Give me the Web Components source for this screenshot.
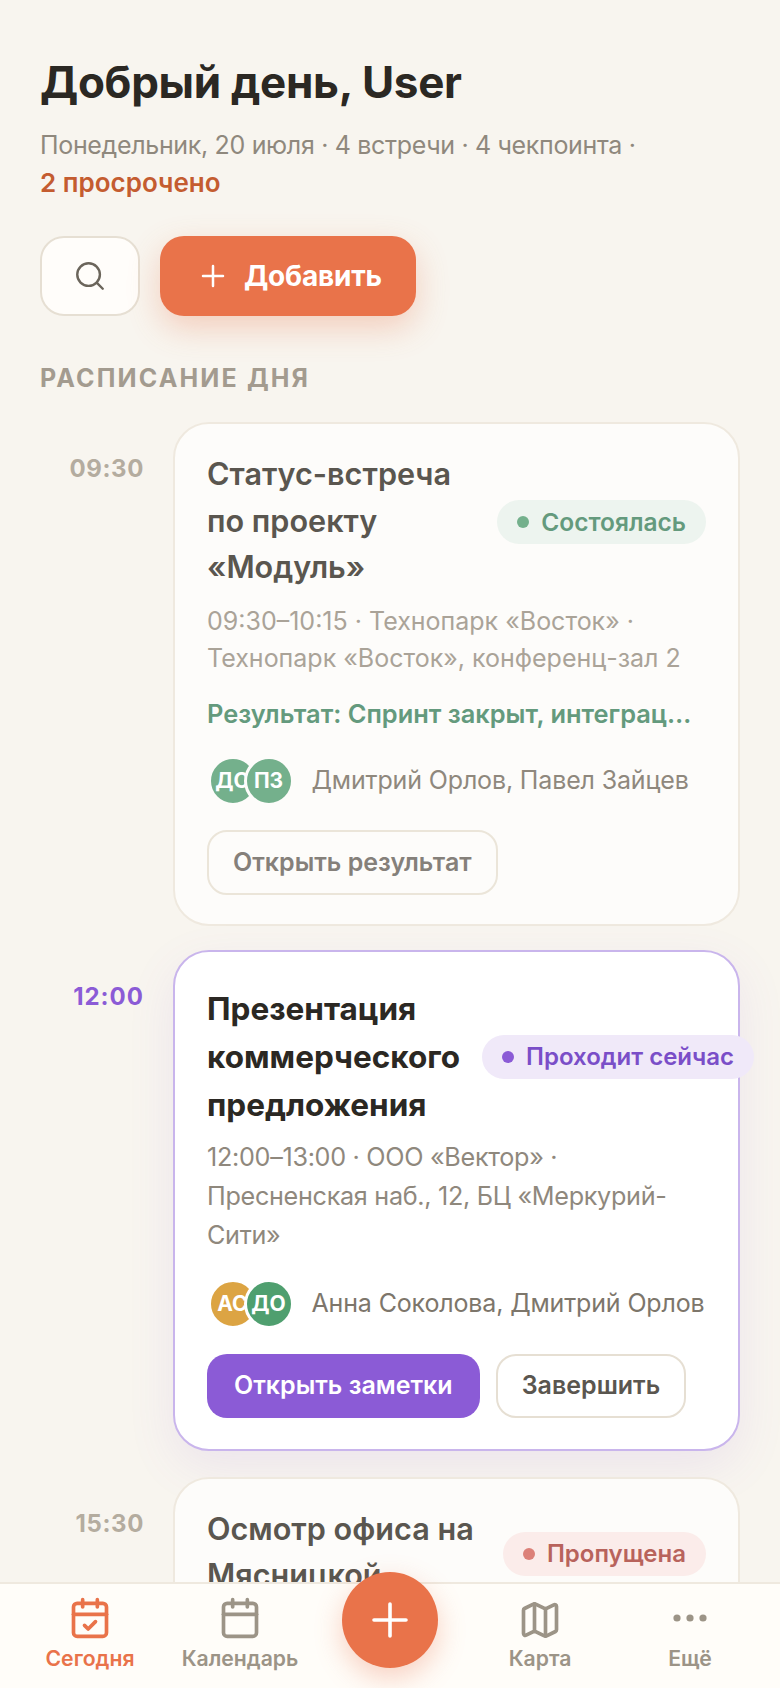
<!DOCTYPE html>
<html lang="ru"><head><meta charset="utf-8"><title>Сегодня</title>
<style>
html,body{margin:0;height:100%;overflow:hidden;background:#f8f5ef;font-family:Inter,"Noto Sans",sans-serif;}
</style></head><body>
<today-screen>
  <day-header slot="header" name="User"></day-header>
  <schedule-row time="09:30" state="past">
    <meeting-card state="past" heading="Статус-встреча по проекту «Модуль»" status="Состоялась" tone="done" meta="09:30–10:15 · Технопарк «Восток» · Технопарк «Восток», конференц-зал 2" result="Результат: Спринт закрыт, интеграц…">
      <avatar-stack people="ДО:#74b08c,ПЗ:#74b08c" names="Дмитрий Орлов, Павел Зайцев"></avatar-stack>
      <action-button slot="actions" kind="ghost">Открыть результат</action-button>
    </meeting-card>
  </schedule-row>
  <schedule-row time="12:00" state="now">
    <meeting-card state="now" heading="Презентация коммерческого предложения" status="Проходит сейчас" tone="now" meta="12:00–13:00 · ООО «Вектор» · Пресненская наб., 12, БЦ «Меркурий-Сити»">
      <avatar-stack people="АС:#dca443,ДО:#4f9f6f" names="Анна Соколова, Дмитрий Орлов"></avatar-stack>
      <action-button slot="actions" kind="primary">Открыть заметки</action-button>
      <action-button slot="actions" kind="ghost">Завершить</action-button>
    </meeting-card>
  </schedule-row>
  <schedule-row time="15:30" state="past">
    <meeting-card state="past" heading="Осмотр офиса на Мясницкой" status="Пропущена" tone="missed"></meeting-card>
  </schedule-row>
</today-screen>
<tab-bar></tab-bar>
<script>
const def=(name,html)=>customElements.define(name,class extends HTMLElement{
  connectedCallback(){ if(this.shadowRoot)return; const r=this.attachShadow({mode:'open'}); r.innerHTML=typeof html==='function'?html(this):html; }
});
const attr=(e,n)=>e.getAttribute(n)||'';

def('today-screen',`<style>
:host{display:block;padding:0 40px;box-sizing:border-box}
h2{margin:0;padding-top:44px;font:700 25px/36px Inter,sans-serif;letter-spacing:2.15px;color:#a39b8f;height:36px;padding-bottom:26px}
</style><slot name="header"></slot><h2>РАСПИСАНИЕ ДНЯ</h2><slot></slot>`);

def('day-header',e=>`<style>
:host{display:block;padding-top:52px}
h1{margin:0;font:700 44px/60px Inter,sans-serif;letter-spacing:-.3px;color:#2b2823}
p{margin:14px 0 0;font:400 25px/38px Inter,sans-serif;letter-spacing:-.33px;color:#8f887d}
b{font-weight:600;font-size:26px;color:#c45c30;white-space:nowrap;letter-spacing:0}
.row{display:flex;gap:20px;margin-top:34px}
.search{width:100px;height:80px;box-sizing:border-box;border:2px solid #e6dfd3;border-radius:24px;background:#fffdfa;display:flex;align-items:center;justify-content:center}
.add{height:80px;width:256px;box-sizing:border-box;padding-left:38px;border-radius:24px;background:#e9734a;color:#fff;display:flex;align-items:center;gap:16px;font:700 28px/1 Inter,sans-serif;letter-spacing:-.2px;box-shadow:0 12px 32px rgba(233,115,74,.3)}
</style><h1>Добрый день, ${attr(e,'name')}</h1>
<p>Понедельник, 20 июля · 4 встречи · 4 чекпоинта · <b>2 просрочено</b></p>
<div class="row"><div class="search"><svg width="34" height="34" viewBox="0 0 24 24" fill="none" stroke="#6b655b" stroke-width="1.7" stroke-linecap="round"><circle cx="11" cy="11" r="8"/><path d="m21 21-4.3-4.3"/></svg></div>
<div class="add"><svg width="30" height="30" viewBox="0 0 24 24" fill="none" stroke="#fff" stroke-width="2" stroke-linecap="round"><path d="M4 12h16M12 4v16"/></svg>Добавить</div></div>`);

def('schedule-row',e=>{const now=attr(e,'state')==='now';return `<style>
:host{display:grid;grid-template-columns:104px minmax(0,1fr);column-gap:29px;margin-bottom:${now?'26px':'24px'}}
.t{text-align:right;padding-top:29px;font:700 24px/36px Inter,sans-serif;letter-spacing:${now?'1px':'.6px'};color:${now?'#8b5bd6':'#b4ac9f'}}
</style><div class="t">${attr(e,'time')}</div><div><slot></slot></div>`});

def('status-pill',e=>{const t=attr(e,'tone'),c={done:['#edf4ef','#74b08c','#649a7d'],now:['#f0e9f9','#8b5bd6','#7a4ec8'],missed:['#fbecea','#dc8078','#b8635c']}[t];
return `<style>
:host{display:inline-flex;flex:none;align-items:center;gap:12px;height:44px;padding:0 20px;${t==='now'?'':'margin-top:3px;'}border-radius:22px;background:${c[0]};color:${c[2]};font:600 ${t==='done'?'24.5px':'24px'}/1 Inter,sans-serif;white-space:nowrap}
i{width:12px;height:12px;border-radius:50%;background:${c[1]}}
</style><i></i><slot></slot>`});

def('meeting-card',e=>{const now=attr(e,'state')==='now',m=attr(e,'meta'),r=attr(e,'result');
return `<style>
:host{display:block;box-sizing:border-box;border-radius:36px;padding:${now?'33px 32px 31px':'27px 32px 29px'};
 border:2px solid ${now?'#c9b5ec':'#efe9df'};background:${now?'#fff':'#fdfcfa'};${now?'box-shadow:0 16px 48px rgba(139,91,214,.1);':''}}
.top{display:flex;align-items:center;gap:22px}
h3{margin:0;flex:1 1 0;min-width:min-content;font:${now?'700 31.5px/48px':'600 30.6px/46.5px'} Inter,sans-serif;color:${now?'#2b2823':'#5a564f'}}
.meta{margin:${now?'9px':'12px'} 0 0;font:400 ${now?'25.2px/39px':'25px/37.5px'} Inter,sans-serif;letter-spacing:${now?'-.3px':'0'};color:${now?'#8f887d':'#aaa398'}}
.res{margin:18px 0 0;font:600 25.4px/36px Inter,sans-serif;color:#649a7d;white-space:nowrap}
.who{margin-top:24px}
.act{display:flex;gap:16px;margin-top:${now?'25px':'24px'}}
${m?'':'.who,.act{display:none}:host{height:260px}'}
</style><div class="top"><h3>${attr(e,'heading')}</h3><status-pill tone="${attr(e,'tone')}">${attr(e,'status')}</status-pill></div>
${m?`<p class="meta">${m}</p>`:''}${r?`<p class="res">${r}</p>`:''}
<div class="who"><slot></slot></div><div class="act"><slot name="actions"></slot></div>`});

def('avatar-stack',e=>{const now=e.closest('meeting-card').getAttribute('state')==='now';
const ring=now?'#fff':'#fdfcfa';
const people=attr(e,'people').split(',').map(p=>p.split(':'));
return `<style>
:host{display:flex;align-items:center;padding-left:.5px}
.a{width:44px;height:44px;box-sizing:content-box;border:3px solid ${ring};border-radius:50%;color:#fff;display:flex;align-items:center;justify-content:center;font:700 21px/1 Inter,sans-serif;overflow:hidden;position:relative;white-space:nowrap;flex:none}
.a+.a{margin-left:-14px}
span{margin-left:18px;font:400 25px/1.4 Inter,sans-serif;letter-spacing:-.15px;color:${now?'#7d766b':'#8f887d'};white-space:nowrap}
</style>${people.map(p=>`<div class="a" style="background:${p[1]}">${p[0]}</div>`).join('')}<span>${attr(e,'names')}</span>`});

def('action-button',e=>{const p=attr(e,'kind')==='primary',now=e.closest('meeting-card').getAttribute('state')==='now';
return `<style>
:host{display:inline-flex;align-items:center;justify-content:center;box-sizing:border-box;height:${now?'64px':'65px'};padding:0 ${p?'27px':'24px'};border-radius:20px;font:600 25px/1 Inter,sans-serif;white-space:nowrap;
${p?'background:#8b5bd6;color:#fff;':`background:${now?'#fff':'#fdfcfa'};border:2px solid ${now?'#e6dfd3':'#ebe5d9'};color:${now?'#5a564f':'#85807a'};`}}
</style><slot></slot>`});

const cal=(extra)=>`<svg width="44" height="44" viewBox="0 0 24 24" fill="none" stroke="currentColor" stroke-width="2" stroke-linecap="round" stroke-linejoin="round"><path d="M8 2v4M16 2v4"/><rect x="3" y="4" width="18" height="18" rx="2"/><path d="M3 10h18"/>${extra}</svg>`;
def('nav-tab',e=>`<style>
:host{flex:1 1 0;display:flex;flex-direction:column;align-items:center;color:${e.hasAttribute('active')?'#e9734a':'#9c9487'};font:600 21.2px/26px Inter,sans-serif}
.i{height:44px;margin-bottom:3px;display:flex;align-items:center;justify-content:center}
</style><div class="i"><slot name="icon"></slot></div><slot></slot>`);

def('tab-bar',`<style>
:host{position:fixed;left:0;right:0;bottom:0;height:106px;box-sizing:border-box;background:#fffdf9;border-top:2px solid #efe9df;display:flex;padding:14px 15px 0}
.gap{flex:1 1 0}
.fab{position:absolute;left:342px;top:-12px;width:96px;height:96px;border-radius:50%;background:#e9734a;display:flex;align-items:center;justify-content:center;box-shadow:0 10px 28px rgba(233,115,74,.32)}
</style>
<nav-tab active><span slot="icon">${cal('<path d="m9 16 2 2 4-4"/>')}</span>Сегодня</nav-tab>
<nav-tab><span slot="icon">${cal('')}</span>Календарь</nav-tab>
<div class="gap"></div>
<nav-tab><svg slot="icon" width="44" height="44" viewBox="0 0 24 24" fill="none" stroke="currentColor" stroke-width="2" stroke-linecap="round" stroke-linejoin="round"><path d="M14.106 5.553a2 2 0 0 0 1.788 0l3.659-1.83A1 1 0 0 1 21 4.619v12.764a1 1 0 0 1-.553.894l-4.553 2.277a2 2 0 0 1-1.788 0l-4.212-2.106a2 2 0 0 0-1.788 0l-3.659 1.83A1 1 0 0 1 3 19.381V6.618a1 1 0 0 1 .553-.894l4.553-2.277a2 2 0 0 1 1.788 0z"/><path d="M15 5.764v15M9 3.236v15"/></svg>Карта</nav-tab>
<nav-tab><svg slot="icon" width="44" height="44" viewBox="0 0 44 44" fill="currentColor"><circle cx="9" cy="20" r="3.6"/><circle cx="22" cy="20" r="3.6"/><circle cx="35" cy="20" r="3.6"/></svg>Ещё</nav-tab>
<div class="fab"><svg width="40" height="40" viewBox="0 0 40 40" fill="none" stroke="#fff" stroke-width="3.6" stroke-linecap="round"><path d="M4 20h32M20 4v32"/></svg></div>`);
</script>
</body></html>
